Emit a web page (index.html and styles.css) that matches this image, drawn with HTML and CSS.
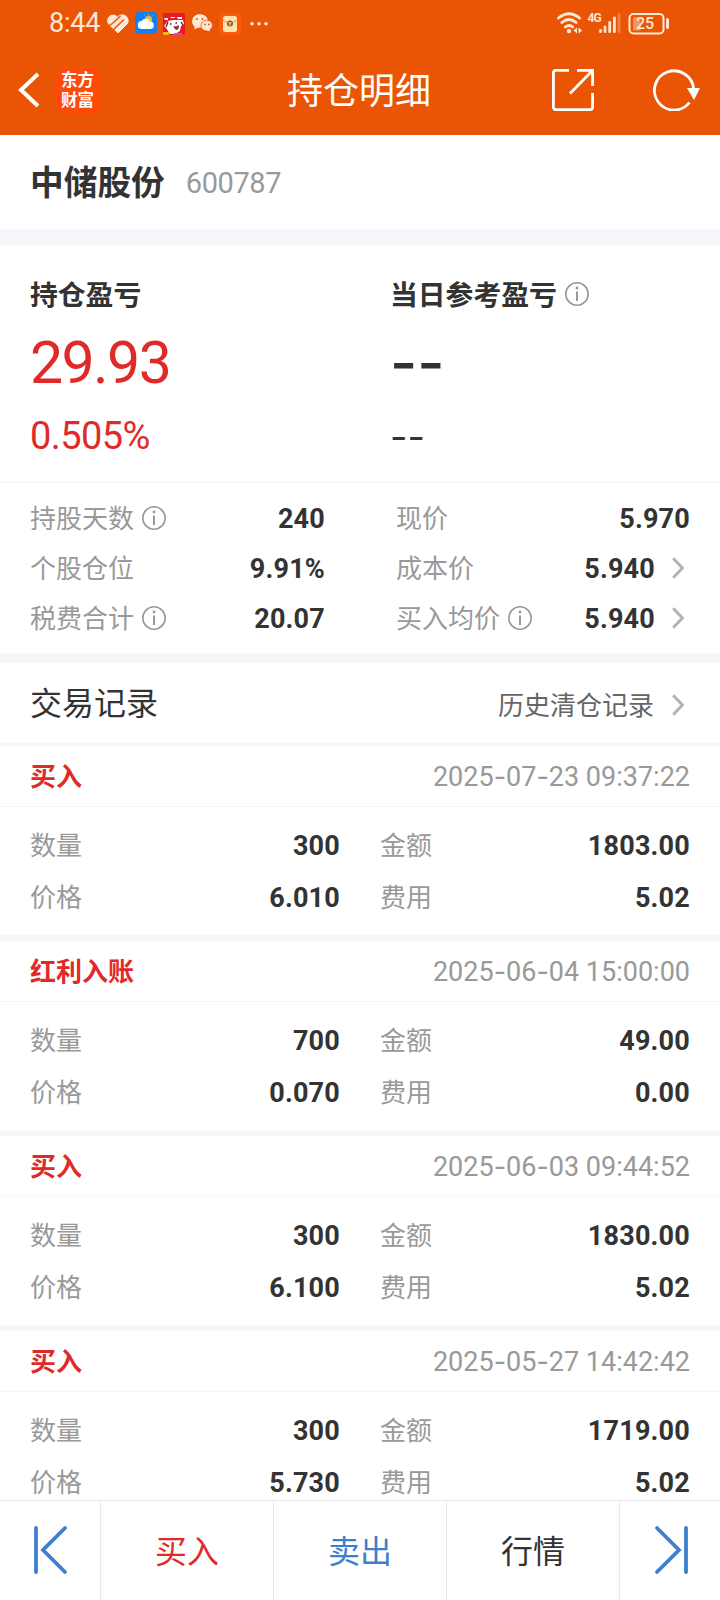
FILE: index.html
```
<!DOCTYPE html>
<html lang="zh-CN">

<head>
    <meta charset="UTF-8">
    <meta name="viewport" content="width=device-width, initial-scale=1.0">
    <title>持仓明细</title>
    <link rel="stylesheet" href="styles.css">
</head>

<body>
    <!-- 公用图标 -->
    <svg class="sprite" width="0" height="0">
        <symbol id="info" viewBox="0 0 24 24">
            <circle cx="12" cy="12" r="11.2" fill="none" stroke="#999" stroke-width="1.6" />
            <circle cx="12" cy="6" r="1.4" fill="#999" />
            <path d="M12 9.500v9.500" stroke="#999" stroke-width="2" />
        </symbol>
        <symbol id="arrow" viewBox="0 0 12 22">
            <path d="M1.2 1.2L10.400 11L1.2 20.8" fill="none" stroke="#b3b3b3" stroke-width="3" />
        </symbol>
    </svg>

    <header class="header">
        <div class="status">
            <span class="time">8:44</span>
            <svg class="apps" width="164" height="24" viewBox="106 10 164 24">
                <!-- 心形 -->
                <path d="M118 32L109 23.500A5.500 5.500 0 0 1 117.500 16A6 6 0 0 1 127.500 22.500Z" fill="#ffe7d6" stroke="#ffe7d6" stroke-linejoin="round" />
                <path d="M108 25.500L113 22L120.500 15M112.500 29.500L124 18.500" fill="none" stroke="#e95504" stroke-width="1.500" />
                <!-- 天气 -->
                <rect x="135" y="11" width="22" height="22" rx="4" fill="#1280ee" />
                <circle cx="148.500" cy="18.500" r="3.500" fill="#f3bd35" />
                <path d="M148.500 13v1.500M153 14.500l-1 1M144.500 14.500l1 1" stroke="#f3bd35" />
                <path d="M142 28a4 4 0 0 1-.3-8a4.600 4.600 0 0 1 8.300.6a3.700 3.700 0 0 1 .2 7.400z" fill="#fff" />
                <!-- 小狗 -->
                <rect x="163" y="12" width="22" height="22" fill="#e91a26" />
                <path d="M164 17h4v2h-3zM170 16h5v1h-4zM177 16h5v2h-4z" fill="#fff" />
                <path d="M168 20l5-1 6 0 4 0 1 4-3 2-1 5-5 3h-5l-4-6-2-2z" fill="#fff" />
                <path d="M170 23h1.500m4-1h1.500m4-1l2 3M168 21l-2 5" stroke="#43272b" stroke-width="1.300" />
                <path d="M173 25.500q4 0 6-1.500q0 5-3 5z" fill="#972c30" />
                <path d="M163 31h6v3h-6z" fill="#f8b52a" />
                <path d="M174 32h8v2h-8z" fill="#d34bb0" />
                <!-- 微信 -->
                <g fill="#ffe7d6">
                    <path d="M192 20a8 6.800 0 1 1 6 6.500l-3.500 2v-3a6.500 6.500 0 0 1-2.500-5.500z" />
                    <path d="M201 24.500a5.700 5.200 0 1 1 9 4.200v2.300l-2.500-1a5.800 5.300 0 0 1-6.500-5.500z" stroke="#e95504" stroke-width=".8" />
                </g>
                <g fill="#e95504">
                    <circle cx="197" cy="18" r="1" />
                    <circle cx="202.500" cy="18" r="1" />
                    <circle cx="205" cy="23.500" r=".9" />
                    <circle cx="208.800" cy="23.500" r=".9" />
                </g>
                <!-- 钱包 -->
                <rect x="219" y="12" width="22" height="22" fill="#fb5a0b" />
                <rect x="223" y="15" width="14" height="16" rx="2.500" fill="#ffe3ad" />
                <path d="M223 19q7 6 14 0" fill="none" stroke="#e79a4a" />
                <circle cx="230" cy="22.500" r="3" fill="#9b541e" />
                <path d="M228.500 21.800h3m-1.500 0v3" stroke="#ffe3ad" />
                <g fill="#ffe7d6">
                    <circle cx="252" cy="22.700" r="1.800" />
                    <circle cx="259" cy="22.700" r="1.800" />
                    <circle cx="266" cy="22.700" r="1.800" />
                </g>
            </svg>
            <svg class="signal" width="114" height="24" viewBox="556 10 114 24">
                <!-- wifi -->
                <g fill="none" stroke="#ffe7d6" stroke-width="2.800" stroke-linecap="round">
                    <path d="M558.500 17q10.500-8.500 21 0" />
                    <path d="M561.800 21.500q7.200-6 14.400 0" />
                    <path d="M565.200 26q3.800-3 7.600 0" />
                </g>
                <circle cx="569" cy="30" r="2.200" fill="#ffe7d6" />
                <path d="M577 26.500v6l-3.500-3zM578.500 26.500v6l3.500-3z" fill="#ffe7d6" />
                <text class="net" x="587.500" y="21">4G</text>
                <!-- 信号 -->
                <g stroke="#ffe7d6" stroke-width="2.800" stroke-linecap="round">
                    <path d="M600.500 29.500v1.200M605 26v4.700M609.700 21.500v9.200M614.400 17v13.700" />
                    <path d="M619 13.500v17.200" opacity=".3" />
                </g>
                <!-- 电量 -->
                <rect x="629.500" y="13" width="34" height="19.500" rx="4" fill="none" stroke="#ffe7d6" stroke-width="2" />
                <rect x="633" y="16" width="7.500" height="13.500" rx="1.500" fill="#fff" opacity=".38" />
                <path d="M667.500 18.500v8" stroke="#ffe7d6" stroke-width="3" stroke-linecap="round" />
                <text class="battery" x="645" y="27.500">25</text>
            </svg>
        </div>
        <nav class="navbar">
            <div class="nav-left">
                <svg width="24" height="38" viewBox="0 0 24 38">
                    <path d="M22 3L5 19L22 35" fill="none" stroke="#fff" stroke-width="4" />
                </svg>
                <div class="logo">
                    <span>东方</span>
                    <span>财富</span>
                </div>
            </div>
            <h1>持仓明细</h1>
            <div class="nav-right">
                <svg width="42" height="42" viewBox="0 0 42 42" fill="none" stroke="#fff" stroke-width="2.800">
                    <path d="M17 1.400H4Q1.400 1.400 1.400 4V38Q1.400 40.600 4 40.600H38Q40.600 40.600 40.600 38V24" />
                    <path d="M25 1.400H40.600V17M39.500 2.500L18 24.500" />
                </svg>
                <svg width="48" height="42" viewBox="0 0 48 42">
                    <path d="M36.500 33.500A19.600 19.600 0 1 1 40.600 20" fill="none" stroke="#fff" stroke-width="2.800" />
                    <path d="M34 19H47L41 31z" fill="#fff" />
                </svg>
            </div>
        </nav>
    </header>

    <section class="stock">
        <h2>中储股份</h2>
        <span class="code">600787</span>
    </section>

    <section class="profit">
        <div class="profit-item">
            <h3>持仓盈亏</h3>
            <div class="amount red">29.93</div>
            <div class="rate red">0.505%</div>
        </div>
        <div class="profit-item">
            <h3>当日参考盈亏<svg class="info"><use href="#info" /></svg></h3>
            <div class="amount empty">--</div>
            <div class="rate empty">--</div>
        </div>
    </section>

    <section class="detail">
        <dl>
            <dt>持股天数<svg class="info"><use href="#info" /></svg></dt>
            <dd>240</dd>
        </dl>
        <dl>
            <dt>现价</dt>
            <dd>5.970</dd>
        </dl>
        <dl>
            <dt>个股仓位</dt>
            <dd>9.91%</dd>
        </dl>
        <dl>
            <dt>成本价</dt>
            <dd>5.940<svg class="arrow"><use href="#arrow" /></svg></dd>
        </dl>
        <dl>
            <dt>税费合计<svg class="info"><use href="#info" /></svg></dt>
            <dd>20.07</dd>
        </dl>
        <dl>
            <dt>买入均价<svg class="info"><use href="#info" /></svg></dt>
            <dd>5.940<svg class="arrow"><use href="#arrow" /></svg></dd>
        </dl>
    </section>

    <section class="title-bar">
        <h2>交易记录</h2>
        <a class="history">历史清仓记录<svg class="arrow"><use href="#arrow" /></svg></a>
    </section>

    <main class="records">
        <article class="record">
            <div class="record-head">
                <b>买入</b>
                <time>2025<i>-</i>07<i>-</i>23 09:37:22</time>
            </div>
            <div class="record-body">
                <dl><dt>数量</dt><dd>300</dd></dl>
                <dl><dt>金额</dt><dd>1803.00</dd></dl>
                <dl><dt>价格</dt><dd>6.010</dd></dl>
                <dl><dt>费用</dt><dd>5.02</dd></dl>
            </div>
        </article>
        <article class="record">
            <div class="record-head">
                <b>红利入账</b>
                <time>2025<i>-</i>06<i>-</i>04 15:00:00</time>
            </div>
            <div class="record-body">
                <dl><dt>数量</dt><dd>700</dd></dl>
                <dl><dt>金额</dt><dd>49.00</dd></dl>
                <dl><dt>价格</dt><dd>0.070</dd></dl>
                <dl><dt>费用</dt><dd>0.00</dd></dl>
            </div>
        </article>
        <article class="record">
            <div class="record-head">
                <b>买入</b>
                <time>2025<i>-</i>06<i>-</i>03 09:44:52</time>
            </div>
            <div class="record-body">
                <dl><dt>数量</dt><dd>300</dd></dl>
                <dl><dt>金额</dt><dd>1830.00</dd></dl>
                <dl><dt>价格</dt><dd>6.100</dd></dl>
                <dl><dt>费用</dt><dd>5.02</dd></dl>
            </div>
        </article>
        <article class="record">
            <div class="record-head">
                <b>买入</b>
                <time>2025<i>-</i>05<i>-</i>27 14:42:42</time>
            </div>
            <div class="record-body">
                <dl><dt>数量</dt><dd>300</dd></dl>
                <dl><dt>金额</dt><dd>1719.00</dd></dl>
                <dl><dt>价格</dt><dd>5.730</dd></dl>
                <dl><dt>费用</dt><dd>5.02</dd></dl>
            </div>
        </article>
    </main>

    <footer class="tabs">
        <a class="step">
            <svg width="36" height="50" viewBox="0 0 36 50">
                <path d="M3 3V47M32 3L10 25L32 47" />
            </svg>
        </a>
        <a class="buy">买入</a>
        <a class="sell">卖出</a>
        <a>行情</a>
        <a class="step">
            <svg width="36" height="50" viewBox="0 0 36 50">
                <path d="M33 3V47M4 3L26 25L4 47" />
            </svg>
        </a>
    </footer>
</body>

</html>
```
FILE: styles.css
```
* {
    box-sizing: border-box;
    margin: 0;
    padding: 0;
}

body {
    display: flex;
    flex-direction: column;
    height: 1600px;
    overflow: hidden;
    font-family: Roboto, "Noto Sans CJK SC", sans-serif;
    font-size: 26px;
    color: #333;
    background: #fff;
}

h1,
h2,
h3 {
    font-weight: 400;
}

svg {
    display: block;
    flex: none;
}

.sprite {
    position: absolute;
}

.red {
    color: #e02a2a;
}

.info {
    width: 24px;
    height: 24px;
    margin: 3px 0 0 8px;
}

.arrow {
    width: 12px;
    height: 22px;
    margin: 0 5px 0 17px;
}


/* 顶部 */

.header {
    flex: none;
    height: 135px;
    color: #fff;
    background: #e95504;
}

.status {
    display: flex;
    align-items: center;
    height: 45px;
    padding: 0 50px 0 49px;
    color: #ffe7d6;
}

.time {
    width: 57px;
    padding-top: 2px;
    font-size: 27px;
    line-height: 43px;
    letter-spacing: -0.2px;
}

.signal {
    margin-left: auto;
}

.net {
    font-size: 12px;
    font-weight: 700;
    letter-spacing: -1px;
    fill: #ffe7d6;
}

.battery {
    font-size: 16px;
    font-weight: 500;
    text-anchor: middle;
    fill: #ffe7d6;
}

.navbar {
    display: grid;
    grid-template-columns: 1fr auto 1fr;
    align-items: center;
    height: 90px;
    padding: 0 19px 0 16px;
}

.navbar h1 {
    padding: 4px 0 0 1px;
    font-size: 36px;
    line-height: 86px;
}

.nav-left,
.nav-right {
    display: flex;
    align-items: center;
}

.nav-right {
    justify-content: flex-end;
    gap: 59px;
}

.logo {
    width: 45px;
    height: 45px;
    margin-left: 15px;
    padding-top: 2px;
    font-family: "Liberation Sans", "Noto Sans CJK SC", sans-serif;
    font-size: 16.5px;
    font-weight: 700;
    line-height: 20px;
    text-align: center;
    background: #ff4a08;
    border-radius: 9px;
}

.logo span {
    display: block;
}


/* 股票名称 */

.stock {
    flex: none;
    display: flex;
    align-items: center;
    height: 110px;
    padding: 0 30px;
    border-bottom: 16px solid #f6f7fa;
}

.stock h2 {
    padding-bottom: 4px;
    font-size: 33.7px;
    font-weight: 700;
}

.code {
    margin-left: 21px;
    padding-top: 2px;
    font-size: 29px;
    letter-spacing: -0.4px;
    color: #999;
}


/* 盈亏 */

.profit {
    flex: none;
    display: grid;
    grid-template-columns: 360px 1fr;
    height: 238px;
    padding: 25px 30px 0;
    border-bottom: 1px solid #f3f3f4;
}

.profit h3 {
    display: flex;
    align-items: center;
    height: 45px;
    font-size: 27.8px;
    font-weight: 700;
}

.amount {
    height: 90px;
    padding-top: 2px;
    font-size: 59px;
    line-height: 91px;
    letter-spacing: -1.6px;
}

.rate {
    height: 58px;
    padding-top: 3px;
    font-size: 38px;
    line-height: 56px;
    letter-spacing: -0.6px;
}

.empty {
    font-family: Inter, sans-serif;
    letter-spacing: 0;
}

.amount.empty {
    font-weight: 500;
}


/* 持仓数据 */

.detail {
    flex: none;
    display: grid;
    grid-template-columns: 295px 294px;
    grid-auto-rows: 50px;
    justify-content: space-between;
    height: 180px;
    padding: 10px 30px 0 30px;
    border-bottom: 10px solid #f6f7fa;
}

dl,
dt,
dd {
    display: flex;
    align-items: center;
}

dl {
    justify-content: space-between;
}

dt {
    padding-bottom: 3px;
    color: #999;
}

dd {
    padding-top: 2px;
    font-size: 27px;
    font-weight: 700;
    letter-spacing: 0.2px;
}

dd .arrow {
    margin: -2px 6px 0 17px;
}


/* 交易记录 */

.title-bar {
    flex: none;
    display: flex;
    align-items: center;
    justify-content: space-between;
    height: 83px;
    padding: 0 31px 0 30px;
    border-bottom: 3px solid #f6f7fa;
}

.title-bar h2 {
    padding-bottom: 4px;
}

.title-bar h2 {
    font-size: 32px;
}

.history {
    display: flex;
    align-items: center;
    color: #666;
}

.history .arrow {
    margin: 4px 5px 0 18px;
}

.records {
    flex: 1;
    min-height: 0;
    overflow: hidden;
}

.record {
    height: 195px;
    border-bottom: 6px solid #f6f7fa;
}

.record-head {
    display: flex;
    align-items: center;
    justify-content: space-between;
    height: 61px;
    padding: 0 30px;
    border-bottom: 1px solid #f6f6f7;
}

.record-head b {
    padding-bottom: 3px;
    color: #e02a2a;
}

.record-head time {
    font-size: 27px;
    color: #999;
}

.record-head i {
    font-family: Inter, sans-serif;
    font-style: normal;
}

.record-body {
    display: grid;
    grid-template-columns: 310px 310px;
    grid-auto-rows: 52px;
    justify-content: space-between;
    padding: 12px 30px 0;
}


/* 底部 */

.tabs {
    flex: none;
    display: grid;
    grid-template-columns: 101px 173px 173px 173px 100px;
    height: 100px;
    background: #fff;
    border-top: 1px solid #e8e8e8;
}

.tabs a {
    display: flex;
    align-items: center;
    justify-content: center;
    padding-bottom: 4px;
    font-size: 32px;
    border-right: 1px solid #e8e8e8;
}

.tabs a:last-child {
    border-right: 0;
}

.tabs .buy {
    color: #e02a2a;
}

.tabs .sell {
    color: #3d7fcf;
}

.step svg {
    margin: 2px 0 0 2px;
    fill: none;
    stroke: #3d7fcf;
    stroke-width: 3.8;
    stroke-linecap: round;
}
```
